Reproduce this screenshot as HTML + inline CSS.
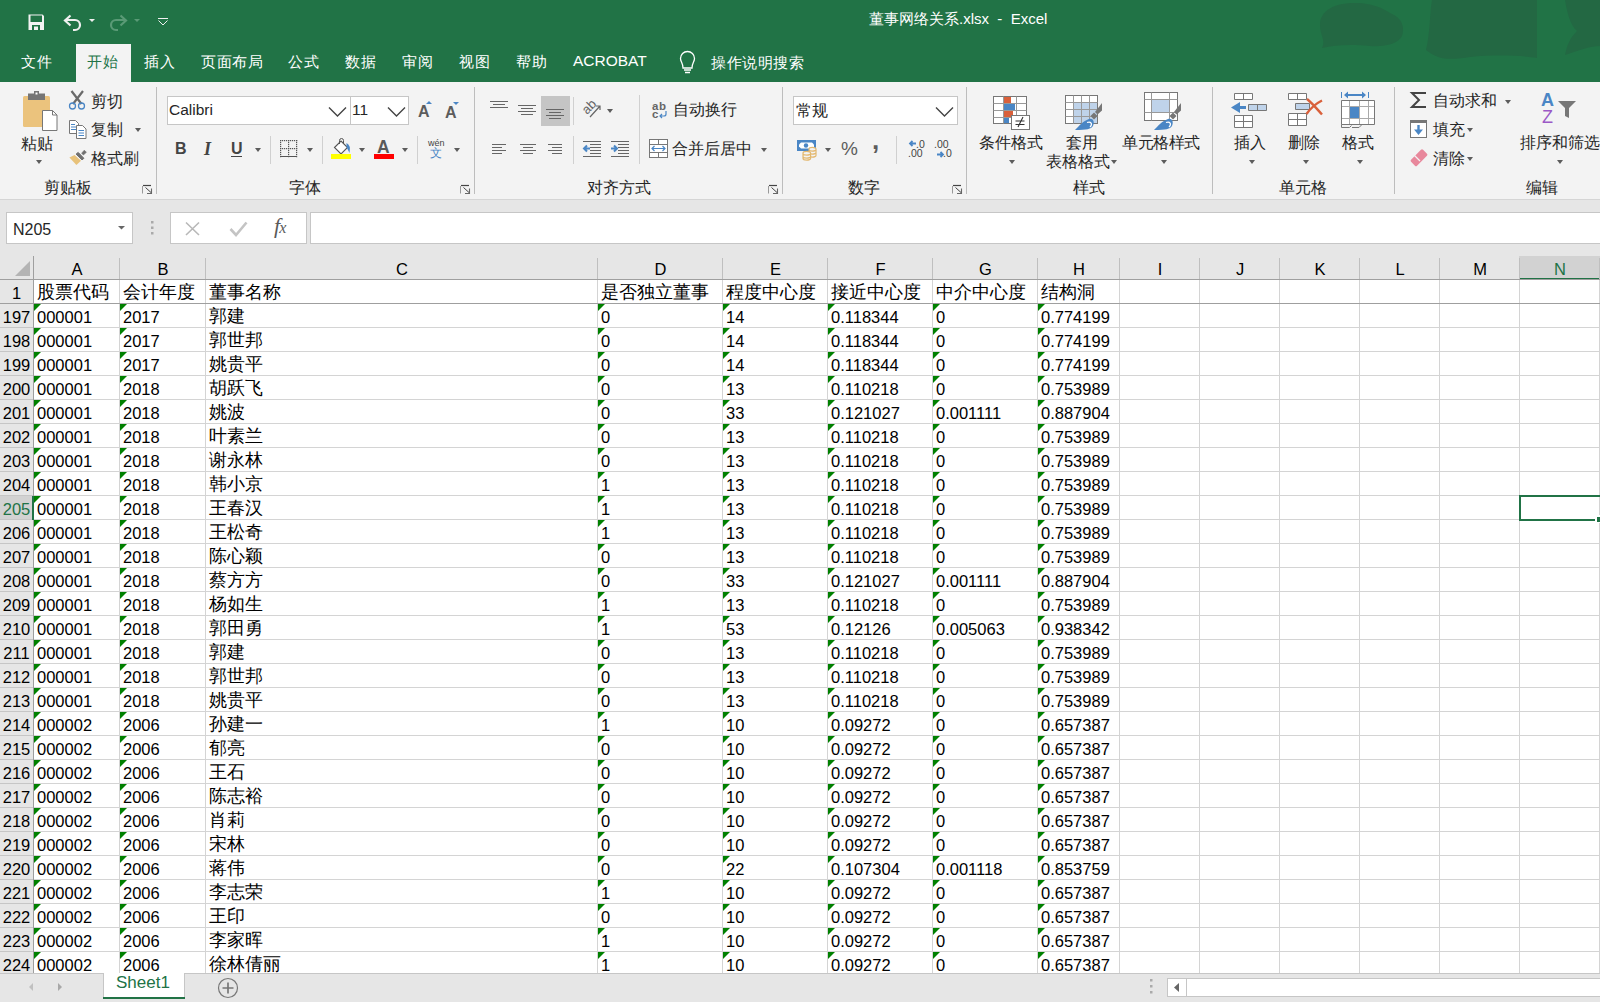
<!DOCTYPE html><html><head><meta charset="utf-8"><style>
*{margin:0;padding:0;box-sizing:border-box}
html,body{width:1600px;height:1002px;overflow:hidden;background:#fff}
body{position:relative;font-family:"Liberation Sans",sans-serif;color:#262626}
.a{position:absolute;white-space:nowrap}
.r{position:absolute;white-space:nowrap;font-size:15.7px;line-height:20px;color:#262626}
.tab{position:absolute;white-space:nowrap;font-size:15px;line-height:20px;letter-spacing:0.5px;color:#fff}
.cj{position:absolute;white-space:nowrap;font-size:18px;line-height:24px;color:#000}
.dg{position:absolute;white-space:nowrap;font-size:16.5px;line-height:24px;color:#000}
.hl{position:absolute;height:1px}
.vl{position:absolute;width:1px}
.tri{position:absolute;width:0;height:0;border-top:7px solid #008000;border-right:7px solid transparent}
.dd{position:absolute;width:0;height:0;border-left:3.5px solid transparent;border-right:3.5px solid transparent;border-top:4px solid #5c5c5c}
.sep{position:absolute;width:1px;background:#c8c8c8}
.gsep{position:absolute;width:1px;background:#c6c6c6}
svg{position:absolute;overflow:visible}
</style></head><body><div class="a" style="left:0px;top:0px;width:1600px;height:82px;background:#217346"></div><svg style="left:0;top:0" width="1600" height="82"><path d="M1322 48 C1326 40 1320 36 1320 25 C1320 10 1335 3 1355 3 C1375 3 1385 10 1392 14 C1402 18 1405 28 1402 36 C1398 44 1385 47 1370 46 C1350 44 1335 45 1322 48 Z" fill="#236843"/><path d="M1426 50 C1430 35 1430 10 1432 0 L1537 0 L1537 58 C1520 55 1490 55 1470 57 C1455 59 1440 62 1426 50 Z" fill="#236843"/><path d="M1565 0 L1600 0 L1600 46 C1590 46 1580 50 1565 55 C1567 45 1570 38 1577 31 C1570 25 1567 12 1565 0 Z" fill="#236843"/></svg><svg style="left:0;top:0" width="200" height="40"><path d="M28.5 14.5 h14 l1.5 1.5 v14 h-15.5 z" fill="#f3f3f3"/><rect x="30.5" y="15.5" width="11.5" height="6.5" fill="#217346"/><rect x="32" y="25" width="8" height="5" fill="#217346"/><rect x="34" y="26.5" width="4" height="3.5" fill="#f3f3f3"/><path d="M66 20 h9 a5 5 0 0 1 0 10 h-2" stroke="#f0f0f0" stroke-width="2.2" fill="none"/><path d="M70.5 15.5 L65 20.5 L70.5 25.5" stroke="#f0f0f0" stroke-width="2.2" fill="none"/><path d="M89 19 h6 l-3 3 z" fill="#f0f0f0"/><path d="M125 20 h-9 a5 5 0 0 0 0 10 h2" stroke="#5a9a76" stroke-width="2.2" fill="none"/><path d="M120.5 15.5 L126 20.5 L120.5 25.5" stroke="#5a9a76" stroke-width="2.2" fill="none"/><path d="M134 19 h6 l-3 3 z" fill="#5a9a76"/><path d="M158 18.5 h10" stroke="#f0f0f0" stroke-width="1"/><path d="M158.5 20.5 L163 25 L167.5 20.5" stroke="#f0f0f0" stroke-width="1" fill="none"/></svg><div class="a" style="left:869px;top:7px;font-size:15px;line-height:24px;color:#fff">董事网络关系.xlsx&nbsp; - &nbsp;Excel</div><div class="a" style="left:76px;top:44px;width:55px;height:38px;background:#f3f3f3"></div><div class="tab" style="left:21px;top:52px;color:#fff">文件</div><div class="tab" style="left:87px;top:52px;color:#217346">开始</div><div class="tab" style="left:144px;top:52px;color:#fff">插入</div><div class="tab" style="left:201px;top:52px;color:#fff">页面布局</div><div class="tab" style="left:288px;top:52px;color:#fff">公式</div><div class="tab" style="left:345px;top:52px;color:#fff">数据</div><div class="tab" style="left:402px;top:52px;color:#fff">审阅</div><div class="tab" style="left:459px;top:52px;color:#fff">视图</div><div class="tab" style="left:516px;top:52px;color:#fff">帮助</div><div class="a" style="left:573px;top:51px;font-size:15.5px;line-height:20px;color:#fff">ACROBAT</div><svg style="left:0;top:0" width="820" height="82"><path d="M683 68 C683 63 680.5 62 680.5 58.5 A7 7 0 0 1 694.5 58.5 C694.5 62 692 63 692 68 Z" stroke="#fff" stroke-width="1.3" fill="none"/><path d="M684 70 h7 M685 72.5 h5" stroke="#fff" stroke-width="1.3"/></svg><div class="tab" style="left:711px;top:53px;color:#fff">操作说明搜索</div><div class="a" style="left:0px;top:82px;width:1600px;height:117px;background:#f3f3f3"></div><div class="a" style="left:0px;top:199px;width:1600px;height:1px;background:#d5d5d5"></div><div class="a" style="left:156px;top:87px;width:1px;height:107px;background:#bdbdbd"></div><div class="a" style="left:474px;top:87px;width:1px;height:107px;background:#bdbdbd"></div><div class="a" style="left:782px;top:87px;width:1px;height:107px;background:#bdbdbd"></div><div class="a" style="left:966px;top:87px;width:1px;height:107px;background:#bdbdbd"></div><div class="a" style="left:1212px;top:87px;width:1px;height:107px;background:#bdbdbd"></div><div class="a" style="left:1394px;top:87px;width:1px;height:107px;background:#bdbdbd"></div><div class="r" style="left:44px;top:178px;">剪贴板</div><div class="r" style="left:289px;top:178px;">字体</div><div class="r" style="left:587px;top:178px;">对齐方式</div><div class="r" style="left:848px;top:178px;">数字</div><div class="r" style="left:1073px;top:178px;">样式</div><div class="r" style="left:1279px;top:178px;">单元格</div><div class="r" style="left:1526px;top:178px;">编辑</div><svg style="left:142px;top:185px" width="11" height="9"><path d="M0.5 8.5 V1" stroke="#999" stroke-width="1"/><path d="M1 0.5 H9" stroke="#444" stroke-width="1.2"/><path d="M3.5 2.5 L9 7.5" stroke="#444" stroke-width="1"/><path d="M9.5 3.5 V8.5 H5" stroke="#666" stroke-width="1.1" fill="none"/></svg><svg style="left:460px;top:185px" width="11" height="9"><path d="M0.5 8.5 V1" stroke="#999" stroke-width="1"/><path d="M1 0.5 H9" stroke="#444" stroke-width="1.2"/><path d="M3.5 2.5 L9 7.5" stroke="#444" stroke-width="1"/><path d="M9.5 3.5 V8.5 H5" stroke="#666" stroke-width="1.1" fill="none"/></svg><svg style="left:768px;top:185px" width="11" height="9"><path d="M0.5 8.5 V1" stroke="#999" stroke-width="1"/><path d="M1 0.5 H9" stroke="#444" stroke-width="1.2"/><path d="M3.5 2.5 L9 7.5" stroke="#444" stroke-width="1"/><path d="M9.5 3.5 V8.5 H5" stroke="#666" stroke-width="1.1" fill="none"/></svg><svg style="left:952px;top:185px" width="11" height="9"><path d="M0.5 8.5 V1" stroke="#999" stroke-width="1"/><path d="M1 0.5 H9" stroke="#444" stroke-width="1.2"/><path d="M3.5 2.5 L9 7.5" stroke="#444" stroke-width="1"/><path d="M9.5 3.5 V8.5 H5" stroke="#666" stroke-width="1.1" fill="none"/></svg><svg style="left:0;top:0" width="160" height="199"><rect x="23" y="96" width="27" height="31" rx="1.5" fill="#ebc37d"/><path d="M28 93.5 h17 v6.5 h-17 z" fill="#757575"/><rect x="34" y="91" width="5" height="4" fill="#757575"/><rect x="35.5" y="92.5" width="2" height="2" fill="#fff"/><path d="M42.5 110.5 h10 l4.5 4.5 v15.5 h-14.5 z" fill="#fff" stroke="#777" stroke-width="1"/><path d="M52.5 110.5 v4.5 h4.5" fill="none" stroke="#777" stroke-width="1"/><path d="M71.5 91 L81.5 104 M83 91 L73 104" stroke="#6a6a6a" stroke-width="2.2"/><circle cx="72.5" cy="106" r="3" fill="none" stroke="#4a86c5" stroke-width="1.3"/><circle cx="81.5" cy="106" r="3" fill="none" stroke="#4a86c5" stroke-width="1.3"/><path d="M69.5 120.5 h6 l3 3 v10 h-9 z" fill="#fff" stroke="#777" stroke-width="1"/><path d="M71 124.5 h4 M71 127 h5 M71 129.5 h5" stroke="#4a86c5" stroke-width="1"/><path d="M76.5 125.5 h6 l3.5 3.5 v9.5 h-9.5 z" fill="#fff" stroke="#777" stroke-width="1"/><path d="M78.5 130.5 h5.5 M78.5 133 h5.5 M78.5 135.5 h5.5" stroke="#4a86c5" stroke-width="1"/><path d="M69.4 157.4 L74.6 155.1 L81 160.7 L76.4 165.1 Z" fill="#e8c27a"/><path d="M76.1 154.1 L78.2 152.4 L83.9 158.3 L82 159.9 Z" fill="#6f6f6f" stroke="#6f6f6f" stroke-width="1" stroke-linejoin="round"/><path d="M81.6 153.2 L84.3 150.2 L86.4 152.3 L83.4 155 Z" fill="#6f6f6f" stroke="#6f6f6f" stroke-width="0.6"/></svg><div class="r" style="left:21px;top:134px;">粘贴</div><div class="dd" style="left:36px;top:160px;border-top-color:#5c5c5c"></div><div class="r" style="left:91px;top:92px;">剪切</div><div class="r" style="left:91px;top:120px;">复制</div><div class="dd" style="left:135px;top:128px;border-top-color:#5c5c5c"></div><div class="r" style="left:91px;top:149px;">格式刷</div><div class="a" style="left:167px;top:96px;width:184px;height:29px;background:#fff;border:1px solid #c6c6c6"></div><div class="a" style="left:350px;top:96px;width:59px;height:29px;background:#fff;border:1px solid #c6c6c6"></div><div class="a" style="left:169px;top:100px;font-size:15.5px;line-height:20px;color:#262626">Calibri</div><div class="a" style="left:352px;top:100px;font-size:15.5px;line-height:20px;color:#262626">11</div><svg style="left:0;top:0" width="480" height="199"><path d="M329 107.5 L337.5 116 L346 107.5" stroke="#444" stroke-width="1.4" fill="none"/><path d="M388 107.5 L396.5 116 L405 107.5" stroke="#444" stroke-width="1.4" fill="none"/><path d="M426 104 l3 -3 l3 3 z" fill="#4a86c5"/><path d="M453 102 l3 3 l3 -3 z" fill="#4a86c5"/><rect x="280" y="140" width="1.2" height="1.2" fill="#555"/><rect x="288" y="140" width="1.2" height="1.2" fill="#555"/><rect x="296" y="140" width="1.2" height="1.2" fill="#555"/><rect x="280" y="142" width="1.2" height="1.2" fill="#555"/><rect x="288" y="142" width="1.2" height="1.2" fill="#555"/><rect x="296" y="142" width="1.2" height="1.2" fill="#555"/><rect x="280" y="144" width="1.2" height="1.2" fill="#555"/><rect x="288" y="144" width="1.2" height="1.2" fill="#555"/><rect x="296" y="144" width="1.2" height="1.2" fill="#555"/><rect x="280" y="146" width="1.2" height="1.2" fill="#555"/><rect x="288" y="146" width="1.2" height="1.2" fill="#555"/><rect x="296" y="146" width="1.2" height="1.2" fill="#555"/><rect x="280" y="148" width="1.2" height="1.2" fill="#555"/><rect x="288" y="148" width="1.2" height="1.2" fill="#555"/><rect x="296" y="148" width="1.2" height="1.2" fill="#555"/><rect x="280" y="150" width="1.2" height="1.2" fill="#555"/><rect x="288" y="150" width="1.2" height="1.2" fill="#555"/><rect x="296" y="150" width="1.2" height="1.2" fill="#555"/><rect x="280" y="152" width="1.2" height="1.2" fill="#555"/><rect x="288" y="152" width="1.2" height="1.2" fill="#555"/><rect x="296" y="152" width="1.2" height="1.2" fill="#555"/><rect x="280" y="154" width="1.2" height="1.2" fill="#555"/><rect x="288" y="154" width="1.2" height="1.2" fill="#555"/><rect x="296" y="154" width="1.2" height="1.2" fill="#555"/><rect x="280" y="156" width="1.2" height="1.2" fill="#555"/><rect x="288" y="156" width="1.2" height="1.2" fill="#555"/><rect x="296" y="156" width="1.2" height="1.2" fill="#555"/><rect x="280" y="140" width="1.2" height="1.2" fill="#555"/><rect x="280" y="148" width="1.2" height="1.2" fill="#555"/><rect x="282" y="140" width="1.2" height="1.2" fill="#555"/><rect x="282" y="148" width="1.2" height="1.2" fill="#555"/><rect x="284" y="140" width="1.2" height="1.2" fill="#555"/><rect x="284" y="148" width="1.2" height="1.2" fill="#555"/><rect x="286" y="140" width="1.2" height="1.2" fill="#555"/><rect x="286" y="148" width="1.2" height="1.2" fill="#555"/><rect x="288" y="140" width="1.2" height="1.2" fill="#555"/><rect x="288" y="148" width="1.2" height="1.2" fill="#555"/><rect x="290" y="140" width="1.2" height="1.2" fill="#555"/><rect x="290" y="148" width="1.2" height="1.2" fill="#555"/><rect x="292" y="140" width="1.2" height="1.2" fill="#555"/><rect x="292" y="148" width="1.2" height="1.2" fill="#555"/><rect x="294" y="140" width="1.2" height="1.2" fill="#555"/><rect x="294" y="148" width="1.2" height="1.2" fill="#555"/><rect x="296" y="140" width="1.2" height="1.2" fill="#555"/><rect x="296" y="148" width="1.2" height="1.2" fill="#555"/><path d="M280 156.5 h17" stroke="#555" stroke-width="1"/><path d="M334.5 147.5 L341 141 L347.5 147.5 L341 154 Z" fill="#fff" stroke="#555" stroke-width="1.1"/><path d="M339.5 144 V140.5 a2 2 0 0 1 4 0 V144" stroke="#555" stroke-width="1" fill="none"/><path d="M346.5 143 q4.5 2 3 10 q-2 -4 -3 -6 z" fill="#4a86c5"/><rect x="331" y="154" width="20" height="5" fill="#ffff00"/><rect x="374" y="154" width="20" height="5" fill="#ff0000"/></svg><div class="a" style="left:418px;top:102px;font-size:16px;line-height:20px;color:#5c5c5c;font-weight:bold">A</div><div class="a" style="left:445px;top:103px;font-size:16px;line-height:20px;color:#5c5c5c;font-weight:bold">A</div><div class="a" style="left:175px;top:139px;font-size:16px;line-height:20px;font-weight:bold;color:#444">B</div><div class="a" style="left:204px;top:139px;font-family:'Liberation Serif',serif;font-size:18px;line-height:20px;font-style:italic;font-weight:bold;color:#444">I</div><div class="a" style="left:231px;top:139px;font-size:16px;line-height:20px;font-weight:bold;color:#444">U</div><div class="a" style="left:231px;top:156px;width:11px;height:1px;background:#444"></div><div class="dd" style="left:255px;top:148px;border-top-color:#5c5c5c"></div><div class="a" style="left:270px;top:136px;width:1px;height:28px;background:#d0d0d0"></div><div class="dd" style="left:307px;top:148px;border-top-color:#5c5c5c"></div><div class="a" style="left:322px;top:136px;width:1px;height:28px;background:#d0d0d0"></div><div class="dd" style="left:359px;top:148px;border-top-color:#5c5c5c"></div><div class="a" style="left:377px;top:137px;font-size:17.5px;line-height:20px;font-weight:bold;color:#595959">A</div><div class="dd" style="left:402px;top:148px;border-top-color:#5c5c5c"></div><div class="a" style="left:417px;top:136px;width:1px;height:28px;background:#d0d0d0"></div><div class="a" style="left:428px;top:138px;font-size:9px;line-height:10px;color:#444">wén</div><div class="a" style="left:430px;top:147px;font-size:12px;line-height:13px;color:#4a86c5">文</div><div class="dd" style="left:454px;top:148px;border-top-color:#5c5c5c"></div><div class="a" style="left:541px;top:96px;width:29px;height:30px;background:#c5c5c5"></div><svg style="left:0;top:0" width="800" height="199"><rect x="490.0" y="101" width="18" height="1" fill="#666"/><rect x="493.0" y="104" width="12" height="1" fill="#666"/><rect x="490.0" y="107" width="18" height="1" fill="#666"/><rect x="518.0" y="105" width="18" height="1" fill="#666"/><rect x="521.0" y="108" width="12" height="1" fill="#666"/><rect x="518.0" y="111" width="18" height="1" fill="#666"/><rect x="521.0" y="114" width="12" height="1" fill="#666"/><rect x="546.0" y="109" width="18" height="1" fill="#666"/><rect x="549.0" y="112" width="12" height="1" fill="#666"/><rect x="546.0" y="115" width="18" height="1" fill="#666"/><rect x="549.0" y="118" width="12" height="1" fill="#666"/><rect x="492" y="144" width="14" height="1" fill="#666"/><rect x="492" y="147" width="10" height="1" fill="#666"/><rect x="492" y="150" width="14" height="1" fill="#666"/><rect x="492" y="153" width="10" height="1" fill="#666"/><rect x="520.0" y="144" width="16" height="1" fill="#666"/><rect x="523.0" y="147" width="10" height="1" fill="#666"/><rect x="520.0" y="150" width="16" height="1" fill="#666"/><rect x="523.0" y="153" width="10" height="1" fill="#666"/><rect x="548" y="144" width="14" height="1" fill="#666"/><rect x="552" y="147" width="10" height="1" fill="#666"/><rect x="548" y="150" width="14" height="1" fill="#666"/><rect x="552" y="153" width="10" height="1" fill="#666"/><rect x="583" y="141" width="18" height="1" fill="#666"/><rect x="590" y="144" width="11" height="1" fill="#666"/><rect x="590" y="147" width="11" height="1" fill="#666"/><rect x="590" y="150" width="11" height="1" fill="#666"/><rect x="590" y="153" width="11" height="1" fill="#666"/><rect x="583" y="156" width="18" height="1" fill="#666"/><path d="M590 148.5 h-6 M587 145.5 l-3 3 l3 3" stroke="#4a86c5" stroke-width="2" fill="none"/><rect x="611" y="141" width="18" height="1" fill="#666"/><rect x="618" y="144" width="11" height="1" fill="#666"/><rect x="618" y="147" width="11" height="1" fill="#666"/><rect x="618" y="150" width="11" height="1" fill="#666"/><rect x="618" y="153" width="11" height="1" fill="#666"/><rect x="611" y="156" width="18" height="1" fill="#666"/><path d="M611 148.5 h6 M614 145.5 l3 3 l-3 3" stroke="#4a86c5" stroke-width="2" fill="none"/><path d="M590 117 L600 106 M596 106 h4 v4" stroke="#666" stroke-width="1.2" fill="none"/><rect x="649.5" y="139.5" width="18" height="18" fill="#fff" stroke="#777"/><path d="M649.5 144.5 h18 M649.5 152.5 h18 M658.5 139.5 v5 M658.5 152.5 v5" stroke="#777" stroke-width="1"/><path d="M652 148.5 h13 M654.5 146 l-2.5 2.5 l2.5 2.5 M662.5 146 l2.5 2.5 l-2.5 2.5" stroke="#4a86c5" stroke-width="1.2" fill="none"/><path d="M666 111 v3 a2 2 0 0 1 -2 2 h-4 M662 114 l-2 2 l2 2" stroke="#4a86c5" stroke-width="1.2" fill="none"/></svg><div class="a" style="left:582px;top:100px;font-size:13px;line-height:14px;color:#666;transform:rotate(-45deg);transform-origin:50% 50%">ab</div><div class="dd" style="left:607px;top:109px;border-top-color:#5c5c5c"></div><div class="a" style="left:573px;top:97px;width:1px;height:28px;background:#d0d0d0"></div><div class="a" style="left:573px;top:136px;width:1px;height:28px;background:#d0d0d0"></div><div class="a" style="left:639px;top:95px;width:1px;height:69px;background:#d0d0d0"></div><div class="a" style="left:652px;top:100px;font-size:11.5px;line-height:12px;color:#666;font-weight:bold;letter-spacing:0.5px">ab</div><div class="a" style="left:652px;top:108px;font-size:11.5px;line-height:12px;color:#666;font-weight:bold">c</div><div class="r" style="left:673px;top:100px;">自动换行</div><div class="r" style="left:672px;top:139px;">合并后居中</div><div class="dd" style="left:761px;top:148px;border-top-color:#5c5c5c"></div><div class="a" style="left:793px;top:96px;width:165px;height:29px;background:#fff;border:1px solid #c6c6c6"></div><div class="r" style="left:796px;top:101px;">常规</div><svg style="left:0;top:0" width="970" height="199"><path d="M936 107.5 L944.5 116 L953 107.5" stroke="#444" stroke-width="1.4" fill="none"/><rect x="797" y="140" width="19" height="11" fill="#4a86c5"/><path d="M801 142.5 h11 l2 2 v2 l-2 2 h-11 l-2 -2 v-2 z" fill="#fff"/><circle cx="806" cy="145.5" r="2.2" fill="#4a86c5"/><path d="M809 149 a3.5 1.5 0 0 1 7 0 v6 a3.5 1.5 0 0 1 -7 0 z" fill="#f3f3f3"/><path d="M809 149.5 a3.5 1.6 0 0 0 7 0 M809 152.5 a3.5 1.6 0 0 0 7 0 M809 155.5 a3.5 1.6 0 0 0 7 0 M809 149 a3.5 1.6 0 0 1 7 0 M809 149 v6.5 M816 149 v6.5" stroke="#e3b86f" stroke-width="1.2" fill="none"/><path d="M803 153 a3.8 1.6 0 0 1 7.6 0 v5 a3.8 1.6 0 0 1 -7.6 0 z" fill="#f3f3f3"/><path d="M803 153.5 a3.8 1.6 0 0 0 7.6 0 M803 156.5 a3.8 1.6 0 0 0 7.6 0 M803 153 a3.8 1.6 0 0 1 7.6 0 M803 153 v5.5 M810.6 153 v5.5 M803 158.5 a3.8 1.6 0 0 0 7.6 0" stroke="#e3b86f" stroke-width="1.2" fill="none"/><path d="M910 143.5 h6 M912.5 141 l-2.5 2.5 l2.5 2.5" stroke="#4a86c5" stroke-width="1.8" fill="none"/><path d="M937 154.5 h6 M940.5 152 l2.5 2.5 l-2.5 2.5" stroke="#4a86c5" stroke-width="1.8" fill="none"/></svg><div class="dd" style="left:825px;top:148px;border-top-color:#5c5c5c"></div><div class="a" style="left:841px;top:139px;font-size:19px;line-height:20px;color:#5c5c5c">%</div><div class="a" style="left:872px;top:130px;font-size:26px;line-height:20px;color:#5c5c5c;font-weight:bold">,</div><div class="a" style="left:896px;top:136px;width:1px;height:28px;background:#d0d0d0"></div><div class="a" style="left:916px;top:139px;font-size:10.5px;line-height:10px;color:#444">.0</div><div class="a" style="left:908px;top:148px;font-size:10.5px;line-height:10px;color:#444">.00</div><div class="a" style="left:934px;top:139px;font-size:10.5px;line-height:10px;color:#444">.00</div><div class="a" style="left:943px;top:148px;font-size:10.5px;line-height:10px;color:#444">.0</div><svg style="left:0;top:0" width="1210" height="199"><rect x="993.5" y="96.5" width="33" height="27" fill="#fff" stroke="#777"/><path d="M993.5 103.5 h33 M993.5 110.5 h33 M993.5 117.5 h33 M1003.5 96.5 v27 M1016.5 96.5 v27" stroke="#999" stroke-width="1"/><rect x="1004" y="97" width="7" height="6" fill="#d9603b"/><rect x="1004" y="104" width="11" height="6" fill="#4a86c5"/><rect x="1004" y="111" width="9" height="6" fill="#d9603b"/><rect x="1004" y="118" width="5" height="5" fill="#4a86c5"/><rect x="1011.5" y="115.5" width="18" height="14" fill="#fff" stroke="#777"/><path d="M1015.5 121 h9 M1015.5 124.5 h9 M1023 117 l-5 10" stroke="#333" stroke-width="1.1" fill="none"/><rect x="1065.5" y="95.5" width="32" height="28" fill="#fff" stroke="#777"/><rect x="1074" y="103" width="23" height="20" fill="#bfd3ea"/><path d="M1065.5 102.5 h32 M1065.5 109.5 h32 M1065.5 116.5 h32 M1073.5 95.5 v28 M1081.5 95.5 v28 M1089.5 95.5 v28" stroke="#999" stroke-width="1"/><path d="M1095 112 L1102 103 L1102 110.5 L1097.5 114.5 Z" fill="#777"/><path d="M1090.5 116 L1094 112.5 L1097.5 116 L1094 119.5 Z" fill="#777"/><path d="M1075 130 C1079 126 1083 121 1089 119 C1093 118 1095 122 1093 126 C1091 129 1087 130 1075 130 Z" fill="#4a86c5"/><path d="M1087 122.5 C1091 121 1093 124 1090 127" stroke="#fff" stroke-width="1.2" fill="none"/><rect x="1144.5" y="92.5" width="33" height="28" fill="#fff" stroke="#777"/><rect x="1152" y="100" width="17" height="12.5" fill="#bfd3ea"/><path d="M1144.5 99.5 h33 M1144.5 112.5 h33 M1151.5 92.5 v28 M1169.5 92.5 v28" stroke="#999" stroke-width="1"/><path d="M1174 112 L1181 103 L1181 110.5 L1176.5 114.5 Z" fill="#777"/><path d="M1169.5 116 L1173 112.5 L1176.5 116 L1173 119.5 Z" fill="#777"/><path d="M1154 130 C1158 126 1162 121 1168 119 C1172 118 1174 122 1172 126 C1170 129 1166 130 1154 130 Z" fill="#4a86c5"/><path d="M1166 122.5 C1170 121 1172 124 1169 127" stroke="#fff" stroke-width="1.2" fill="none"/></svg><div class="r" style="left:979px;top:133px;">条件格式</div><div class="dd" style="left:1009px;top:160px;border-top-color:#5c5c5c"></div><div class="r" style="left:1066px;top:133px;">套用</div><div class="r" style="left:1046px;top:152px;">表格格式</div><div class="dd" style="left:1111px;top:160px;border-top-color:#5c5c5c"></div><div class="r" style="left:1122px;top:133px;letter-spacing:-0.4px">单元格样式</div><div class="dd" style="left:1161px;top:160px;border-top-color:#5c5c5c"></div><svg style="left:0;top:0" width="1600" height="199"><path d="M1234.5 93.5 h18 v6 h-18 z M1243.5 93.5 v6" stroke="#777" fill="#fff"/><path d="M1248.5 104.5 h18 v6 h-18 z" stroke="#777" fill="#bfd3ea"/><path d="M1257.5 104.5 v6" stroke="#777"/><path d="M1234.5 115.5 h18 v12 h-18 z M1243.5 115.5 v12 M1234.5 121.5 h18" stroke="#777" fill="#fff"/><path d="M1246 107.5 h-10" stroke="#4a86c5" stroke-width="3"/><path d="M1231 107.5 L1240 102 L1240 113 Z" fill="#4a86c5"/><path d="M1288.5 93.5 h18 v6 h-18 z M1297.5 93.5 v6" stroke="#777" fill="#fff"/><path d="M1295.5 103.5 h14 v6 h-14 z" stroke="#777" fill="#bfd3ea"/><path d="M1288.5 113.5 h18 v12 h-18 z M1297.5 113.5 v12 M1288.5 119.5 h18" stroke="#777" fill="#fff"/><path d="M1307 99 C1312 103 1317 109 1322 114.5 M1322 100.5 C1315 104 1310 109 1306.5 114" stroke="#d9603b" stroke-width="2.4" fill="none"/><path d="M1341.5 92 v6 M1368.5 92 v6" stroke="#4a86c5" stroke-width="1"/><path d="M1346 95 h18" stroke="#4a86c5" stroke-width="2"/><path d="M1344 95 l4 -3.5 v7 z M1366 95 l-4 -3.5 v7 z" fill="#4a86c5"/><path d="M1341.5 100.5 h33 v24 h-33 z" fill="#fff" stroke="#777"/><path d="M1342 106.5 h32 M1342 118.5 h32 M1349.5 101 v23 M1359.5 101 v23 M1368.5 101 v23" stroke="#aaa"/><path d="M1341.5 124.5 v3 h8 l2 -2 M1352 127.5 h7 l3 -3" stroke="#777" fill="none"/><rect x="1350" y="107" width="9" height="11" fill="#4a86c5"/><path d="M1426 93 h-14 l7 7 l-7 7 h14" stroke="#444" stroke-width="2" fill="none"/><rect x="1410.5" y="120.5" width="16" height="17" fill="#fff" stroke="#777"/><rect x="1411" y="121" width="16" height="2" fill="#777"/><path d="M1418.5 125 v6" stroke="#4a86c5" stroke-width="2.4"/><path d="M1414 129.5 h9 l-4.5 5.5 z" fill="#4a86c5"/><rect x="1410.5" y="153.5" width="17" height="8.5" rx="1.5" fill="#e8889c" transform="rotate(-45 1419 157.75)"/><path d="M1414.5 155.5 L1420 161" stroke="#f3f3f3" stroke-width="1.3"/><path d="M1558 101 h18 l-7 7 v10 l-4 -2 v-8 z" fill="#777"/></svg><div class="a" style="left:1541px;top:90px;font-size:18px;line-height:20px;color:#4a86c5;font-weight:bold">A</div><div class="a" style="left:1542px;top:107px;font-size:18px;line-height:20px;color:#9b59c6">Z</div><div class="r" style="left:1234px;top:133px;">插入</div><div class="dd" style="left:1249px;top:160px;border-top-color:#5c5c5c"></div><div class="r" style="left:1288px;top:133px;">删除</div><div class="dd" style="left:1303px;top:160px;border-top-color:#5c5c5c"></div><div class="r" style="left:1342px;top:133px;">格式</div><div class="dd" style="left:1357px;top:160px;border-top-color:#5c5c5c"></div><div class="r" style="left:1433px;top:91px;">自动求和</div><div class="dd" style="left:1505px;top:100px;border-top-color:#5c5c5c"></div><div class="r" style="left:1433px;top:120px;">填充</div><div class="dd" style="left:1467px;top:128px;border-top-color:#5c5c5c"></div><div class="r" style="left:1433px;top:149px;">清除</div><div class="dd" style="left:1467px;top:157px;border-top-color:#5c5c5c"></div><div class="r" style="left:1520px;top:133px;">排序和筛选</div><div class="dd" style="left:1557px;top:160px;border-top-color:#5c5c5c"></div><div class="a" style="left:0px;top:200px;width:1600px;height:56px;background:#e6e6e6"></div><div class="a" style="left:6px;top:212px;width:127px;height:32px;background:#fff;border:1px solid #c6c6c6"></div><div class="a" style="left:13px;top:220px;font-size:16px;line-height:20px;color:#262626">N205</div><svg style="left:0;top:0" width="340" height="256"><path d="M118 226 h7 l-3.5 3.5 z" fill="#666"/><rect x="151" y="221" width="2.5" height="2.5" fill="#aaa"/><rect x="151" y="226.5" width="2.5" height="2.5" fill="#aaa"/><rect x="151" y="232" width="2.5" height="2.5" fill="#aaa"/><path d="M186 222.5 L199 235 M199 222.5 L186 235" stroke="#b8b8b8" stroke-width="1.6"/><path d="M230.5 229 L236 235 L246.5 222.5" stroke="#c2c2c2" stroke-width="2.6" fill="none"/></svg><div class="a" style="left:170px;top:212px;width:137px;height:32px;background:#fff;border:1px solid #c6c6c6"></div><svg style="left:0;top:0" width="340" height="256"><path d="M186 222.5 L199 235 M199 222.5 L186 235" stroke="#b8b8b8" stroke-width="1.6"/><path d="M230.5 229 L236 235 L246.5 222.5" stroke="#c4c4c4" stroke-width="2.6" fill="none"/></svg><div class="a" style="left:274px;top:214px;font-family:'Liberation Serif',serif;font-size:22px;line-height:24px;color:#5a5a5a;letter-spacing:-1px"><i>f</i><i style="font-size:16px">x</i></div><div class="a" style="left:310px;top:212px;width:1290px;height:32px;background:#fff;border:1px solid #c6c6c6;border-right:none"></div><div class="a" style="left:0px;top:256px;width:1600px;height:717px;background:#fff"></div><div class="a" style="left:0px;top:256px;width:1600px;height:24px;background:#e6e6e6"></div><div class="a" style="left:0px;top:280px;width:33px;height:693px;background:#e6e6e6"></div><div class="a" style="left:1519px;top:256px;width:81px;height:24px;background:#d2d2d2"></div><div class="a" style="left:1519px;top:278px;width:81px;height:2px;background:#217346"></div><div class="a" style="left:0px;top:496px;width:32px;height:24px;background:#d2d2d2"></div><svg style="left:0;top:0" width="34" height="280"><path d="M30 261 V276 H15 Z" fill="#b4b4b4"/></svg><div class="a" style="left:33px;top:327px;width:1567px;height:1px;background:#d4d4d4"></div><div class="a" style="left:0px;top:327px;width:33px;height:1px;background:#c6c6c6"></div><div class="a" style="left:33px;top:351px;width:1567px;height:1px;background:#d4d4d4"></div><div class="a" style="left:0px;top:351px;width:33px;height:1px;background:#c6c6c6"></div><div class="a" style="left:33px;top:375px;width:1567px;height:1px;background:#d4d4d4"></div><div class="a" style="left:0px;top:375px;width:33px;height:1px;background:#c6c6c6"></div><div class="a" style="left:33px;top:399px;width:1567px;height:1px;background:#d4d4d4"></div><div class="a" style="left:0px;top:399px;width:33px;height:1px;background:#c6c6c6"></div><div class="a" style="left:33px;top:423px;width:1567px;height:1px;background:#d4d4d4"></div><div class="a" style="left:0px;top:423px;width:33px;height:1px;background:#c6c6c6"></div><div class="a" style="left:33px;top:447px;width:1567px;height:1px;background:#d4d4d4"></div><div class="a" style="left:0px;top:447px;width:33px;height:1px;background:#c6c6c6"></div><div class="a" style="left:33px;top:471px;width:1567px;height:1px;background:#d4d4d4"></div><div class="a" style="left:0px;top:471px;width:33px;height:1px;background:#c6c6c6"></div><div class="a" style="left:33px;top:495px;width:1567px;height:1px;background:#d4d4d4"></div><div class="a" style="left:0px;top:495px;width:33px;height:1px;background:#c6c6c6"></div><div class="a" style="left:33px;top:519px;width:1567px;height:1px;background:#d4d4d4"></div><div class="a" style="left:0px;top:519px;width:33px;height:1px;background:#c6c6c6"></div><div class="a" style="left:33px;top:543px;width:1567px;height:1px;background:#d4d4d4"></div><div class="a" style="left:0px;top:543px;width:33px;height:1px;background:#c6c6c6"></div><div class="a" style="left:33px;top:567px;width:1567px;height:1px;background:#d4d4d4"></div><div class="a" style="left:0px;top:567px;width:33px;height:1px;background:#c6c6c6"></div><div class="a" style="left:33px;top:591px;width:1567px;height:1px;background:#d4d4d4"></div><div class="a" style="left:0px;top:591px;width:33px;height:1px;background:#c6c6c6"></div><div class="a" style="left:33px;top:615px;width:1567px;height:1px;background:#d4d4d4"></div><div class="a" style="left:0px;top:615px;width:33px;height:1px;background:#c6c6c6"></div><div class="a" style="left:33px;top:639px;width:1567px;height:1px;background:#d4d4d4"></div><div class="a" style="left:0px;top:639px;width:33px;height:1px;background:#c6c6c6"></div><div class="a" style="left:33px;top:663px;width:1567px;height:1px;background:#d4d4d4"></div><div class="a" style="left:0px;top:663px;width:33px;height:1px;background:#c6c6c6"></div><div class="a" style="left:33px;top:687px;width:1567px;height:1px;background:#d4d4d4"></div><div class="a" style="left:0px;top:687px;width:33px;height:1px;background:#c6c6c6"></div><div class="a" style="left:33px;top:711px;width:1567px;height:1px;background:#d4d4d4"></div><div class="a" style="left:0px;top:711px;width:33px;height:1px;background:#c6c6c6"></div><div class="a" style="left:33px;top:735px;width:1567px;height:1px;background:#d4d4d4"></div><div class="a" style="left:0px;top:735px;width:33px;height:1px;background:#c6c6c6"></div><div class="a" style="left:33px;top:759px;width:1567px;height:1px;background:#d4d4d4"></div><div class="a" style="left:0px;top:759px;width:33px;height:1px;background:#c6c6c6"></div><div class="a" style="left:33px;top:783px;width:1567px;height:1px;background:#d4d4d4"></div><div class="a" style="left:0px;top:783px;width:33px;height:1px;background:#c6c6c6"></div><div class="a" style="left:33px;top:807px;width:1567px;height:1px;background:#d4d4d4"></div><div class="a" style="left:0px;top:807px;width:33px;height:1px;background:#c6c6c6"></div><div class="a" style="left:33px;top:831px;width:1567px;height:1px;background:#d4d4d4"></div><div class="a" style="left:0px;top:831px;width:33px;height:1px;background:#c6c6c6"></div><div class="a" style="left:33px;top:855px;width:1567px;height:1px;background:#d4d4d4"></div><div class="a" style="left:0px;top:855px;width:33px;height:1px;background:#c6c6c6"></div><div class="a" style="left:33px;top:879px;width:1567px;height:1px;background:#d4d4d4"></div><div class="a" style="left:0px;top:879px;width:33px;height:1px;background:#c6c6c6"></div><div class="a" style="left:33px;top:903px;width:1567px;height:1px;background:#d4d4d4"></div><div class="a" style="left:0px;top:903px;width:33px;height:1px;background:#c6c6c6"></div><div class="a" style="left:33px;top:927px;width:1567px;height:1px;background:#d4d4d4"></div><div class="a" style="left:0px;top:927px;width:33px;height:1px;background:#c6c6c6"></div><div class="a" style="left:33px;top:951px;width:1567px;height:1px;background:#d4d4d4"></div><div class="a" style="left:0px;top:951px;width:33px;height:1px;background:#c6c6c6"></div><div class="a" style="left:119px;top:280px;width:1px;height:693px;background:#d4d4d4"></div><div class="a" style="left:119px;top:258px;width:1px;height:21px;background:#bfbfbf"></div><div class="a" style="left:205px;top:280px;width:1px;height:693px;background:#d4d4d4"></div><div class="a" style="left:205px;top:258px;width:1px;height:21px;background:#bfbfbf"></div><div class="a" style="left:597px;top:280px;width:1px;height:693px;background:#d4d4d4"></div><div class="a" style="left:597px;top:258px;width:1px;height:21px;background:#bfbfbf"></div><div class="a" style="left:722px;top:280px;width:1px;height:693px;background:#d4d4d4"></div><div class="a" style="left:722px;top:258px;width:1px;height:21px;background:#bfbfbf"></div><div class="a" style="left:827px;top:280px;width:1px;height:693px;background:#d4d4d4"></div><div class="a" style="left:827px;top:258px;width:1px;height:21px;background:#bfbfbf"></div><div class="a" style="left:932px;top:280px;width:1px;height:693px;background:#d4d4d4"></div><div class="a" style="left:932px;top:258px;width:1px;height:21px;background:#bfbfbf"></div><div class="a" style="left:1037px;top:280px;width:1px;height:693px;background:#d4d4d4"></div><div class="a" style="left:1037px;top:258px;width:1px;height:21px;background:#bfbfbf"></div><div class="a" style="left:1119px;top:280px;width:1px;height:693px;background:#d4d4d4"></div><div class="a" style="left:1119px;top:258px;width:1px;height:21px;background:#bfbfbf"></div><div class="a" style="left:1199px;top:280px;width:1px;height:693px;background:#d4d4d4"></div><div class="a" style="left:1199px;top:258px;width:1px;height:21px;background:#bfbfbf"></div><div class="a" style="left:1279px;top:280px;width:1px;height:693px;background:#d4d4d4"></div><div class="a" style="left:1279px;top:258px;width:1px;height:21px;background:#bfbfbf"></div><div class="a" style="left:1359px;top:280px;width:1px;height:693px;background:#d4d4d4"></div><div class="a" style="left:1359px;top:258px;width:1px;height:21px;background:#bfbfbf"></div><div class="a" style="left:1439px;top:280px;width:1px;height:693px;background:#d4d4d4"></div><div class="a" style="left:1439px;top:258px;width:1px;height:21px;background:#bfbfbf"></div><div class="a" style="left:1519px;top:280px;width:1px;height:693px;background:#d4d4d4"></div><div class="a" style="left:1519px;top:258px;width:1px;height:21px;background:#bfbfbf"></div><div class="a" style="left:1599px;top:280px;width:1px;height:693px;background:#d4d4d4"></div><div class="a" style="left:1599px;top:258px;width:1px;height:21px;background:#bfbfbf"></div><div class="a" style="left:33px;top:256px;width:1px;height:717px;background:#9f9f9f"></div><div class="a" style="left:32px;top:496px;width:2px;height:24px;background:#217346"></div><div class="a" style="left:0px;top:279px;width:1600px;height:1px;background:#9f9f9f"></div><div class="a" style="left:0px;top:303px;width:1600px;height:1px;background:#9f9f9f"></div><div class="dg" style="left:34px;top:257px;width:86px;text-align:center;color:#000">A</div><div class="dg" style="left:120px;top:257px;width:86px;text-align:center;color:#000">B</div><div class="dg" style="left:206px;top:257px;width:392px;text-align:center;color:#000">C</div><div class="dg" style="left:598px;top:257px;width:125px;text-align:center;color:#000">D</div><div class="dg" style="left:723px;top:257px;width:105px;text-align:center;color:#000">E</div><div class="dg" style="left:828px;top:257px;width:105px;text-align:center;color:#000">F</div><div class="dg" style="left:933px;top:257px;width:105px;text-align:center;color:#000">G</div><div class="dg" style="left:1038px;top:257px;width:82px;text-align:center;color:#000">H</div><div class="dg" style="left:1120px;top:257px;width:80px;text-align:center;color:#000">I</div><div class="dg" style="left:1200px;top:257px;width:80px;text-align:center;color:#000">J</div><div class="dg" style="left:1280px;top:257px;width:80px;text-align:center;color:#000">K</div><div class="dg" style="left:1360px;top:257px;width:80px;text-align:center;color:#000">L</div><div class="dg" style="left:1440px;top:257px;width:80px;text-align:center;color:#000">M</div><div class="dg" style="left:1520px;top:257px;width:80px;text-align:center;color:#217346">N</div><div class="cj" style="left:37px;top:280px">股票代码</div><div class="cj" style="left:123px;top:280px">会计年度</div><div class="cj" style="left:209px;top:280px">董事名称</div><div class="cj" style="left:601px;top:280px">是否独立董事</div><div class="cj" style="left:726px;top:280px">程度中心度</div><div class="cj" style="left:831px;top:280px">接近中心度</div><div class="cj" style="left:936px;top:280px">中介中心度</div><div class="cj" style="left:1041px;top:280px">结构洞</div><div class="dg" style="left:0;top:281px;width:33px;text-align:center">1</div><div class="a" style="left:0;top:0;width:1600px;height:973px;overflow:hidden"><div class="dg" style="left:0;top:305px;width:33px;text-align:center;color:#000">197</div><div class="tri" style="left:34px;top:304px"></div><div class="dg" style="left:37px;top:305px">000001</div><div class="tri" style="left:120px;top:304px"></div><div class="dg" style="left:123px;top:305px">2017</div><div class="cj" style="left:209px;top:304px">郭建</div><div class="tri" style="left:598px;top:304px"></div><div class="dg" style="left:601px;top:305px">0</div><div class="tri" style="left:723px;top:304px"></div><div class="dg" style="left:726px;top:305px">14</div><div class="tri" style="left:828px;top:304px"></div><div class="dg" style="left:831px;top:305px">0.118344</div><div class="tri" style="left:933px;top:304px"></div><div class="dg" style="left:936px;top:305px">0</div><div class="tri" style="left:1038px;top:304px"></div><div class="dg" style="left:1041px;top:305px">0.774199</div><div class="dg" style="left:0;top:329px;width:33px;text-align:center;color:#000">198</div><div class="tri" style="left:34px;top:328px"></div><div class="dg" style="left:37px;top:329px">000001</div><div class="tri" style="left:120px;top:328px"></div><div class="dg" style="left:123px;top:329px">2017</div><div class="cj" style="left:209px;top:328px">郭世邦</div><div class="tri" style="left:598px;top:328px"></div><div class="dg" style="left:601px;top:329px">0</div><div class="tri" style="left:723px;top:328px"></div><div class="dg" style="left:726px;top:329px">14</div><div class="tri" style="left:828px;top:328px"></div><div class="dg" style="left:831px;top:329px">0.118344</div><div class="tri" style="left:933px;top:328px"></div><div class="dg" style="left:936px;top:329px">0</div><div class="tri" style="left:1038px;top:328px"></div><div class="dg" style="left:1041px;top:329px">0.774199</div><div class="dg" style="left:0;top:353px;width:33px;text-align:center;color:#000">199</div><div class="tri" style="left:34px;top:352px"></div><div class="dg" style="left:37px;top:353px">000001</div><div class="tri" style="left:120px;top:352px"></div><div class="dg" style="left:123px;top:353px">2017</div><div class="cj" style="left:209px;top:352px">姚贵平</div><div class="tri" style="left:598px;top:352px"></div><div class="dg" style="left:601px;top:353px">0</div><div class="tri" style="left:723px;top:352px"></div><div class="dg" style="left:726px;top:353px">14</div><div class="tri" style="left:828px;top:352px"></div><div class="dg" style="left:831px;top:353px">0.118344</div><div class="tri" style="left:933px;top:352px"></div><div class="dg" style="left:936px;top:353px">0</div><div class="tri" style="left:1038px;top:352px"></div><div class="dg" style="left:1041px;top:353px">0.774199</div><div class="dg" style="left:0;top:377px;width:33px;text-align:center;color:#000">200</div><div class="tri" style="left:34px;top:376px"></div><div class="dg" style="left:37px;top:377px">000001</div><div class="tri" style="left:120px;top:376px"></div><div class="dg" style="left:123px;top:377px">2018</div><div class="cj" style="left:209px;top:376px">胡跃飞</div><div class="tri" style="left:598px;top:376px"></div><div class="dg" style="left:601px;top:377px">0</div><div class="tri" style="left:723px;top:376px"></div><div class="dg" style="left:726px;top:377px">13</div><div class="tri" style="left:828px;top:376px"></div><div class="dg" style="left:831px;top:377px">0.110218</div><div class="tri" style="left:933px;top:376px"></div><div class="dg" style="left:936px;top:377px">0</div><div class="tri" style="left:1038px;top:376px"></div><div class="dg" style="left:1041px;top:377px">0.753989</div><div class="dg" style="left:0;top:401px;width:33px;text-align:center;color:#000">201</div><div class="tri" style="left:34px;top:400px"></div><div class="dg" style="left:37px;top:401px">000001</div><div class="tri" style="left:120px;top:400px"></div><div class="dg" style="left:123px;top:401px">2018</div><div class="cj" style="left:209px;top:400px">姚波</div><div class="tri" style="left:598px;top:400px"></div><div class="dg" style="left:601px;top:401px">0</div><div class="tri" style="left:723px;top:400px"></div><div class="dg" style="left:726px;top:401px">33</div><div class="tri" style="left:828px;top:400px"></div><div class="dg" style="left:831px;top:401px">0.121027</div><div class="tri" style="left:933px;top:400px"></div><div class="dg" style="left:936px;top:401px">0.001111</div><div class="tri" style="left:1038px;top:400px"></div><div class="dg" style="left:1041px;top:401px">0.887904</div><div class="dg" style="left:0;top:425px;width:33px;text-align:center;color:#000">202</div><div class="tri" style="left:34px;top:424px"></div><div class="dg" style="left:37px;top:425px">000001</div><div class="tri" style="left:120px;top:424px"></div><div class="dg" style="left:123px;top:425px">2018</div><div class="cj" style="left:209px;top:424px">叶素兰</div><div class="tri" style="left:598px;top:424px"></div><div class="dg" style="left:601px;top:425px">0</div><div class="tri" style="left:723px;top:424px"></div><div class="dg" style="left:726px;top:425px">13</div><div class="tri" style="left:828px;top:424px"></div><div class="dg" style="left:831px;top:425px">0.110218</div><div class="tri" style="left:933px;top:424px"></div><div class="dg" style="left:936px;top:425px">0</div><div class="tri" style="left:1038px;top:424px"></div><div class="dg" style="left:1041px;top:425px">0.753989</div><div class="dg" style="left:0;top:449px;width:33px;text-align:center;color:#000">203</div><div class="tri" style="left:34px;top:448px"></div><div class="dg" style="left:37px;top:449px">000001</div><div class="tri" style="left:120px;top:448px"></div><div class="dg" style="left:123px;top:449px">2018</div><div class="cj" style="left:209px;top:448px">谢永林</div><div class="tri" style="left:598px;top:448px"></div><div class="dg" style="left:601px;top:449px">0</div><div class="tri" style="left:723px;top:448px"></div><div class="dg" style="left:726px;top:449px">13</div><div class="tri" style="left:828px;top:448px"></div><div class="dg" style="left:831px;top:449px">0.110218</div><div class="tri" style="left:933px;top:448px"></div><div class="dg" style="left:936px;top:449px">0</div><div class="tri" style="left:1038px;top:448px"></div><div class="dg" style="left:1041px;top:449px">0.753989</div><div class="dg" style="left:0;top:473px;width:33px;text-align:center;color:#000">204</div><div class="tri" style="left:34px;top:472px"></div><div class="dg" style="left:37px;top:473px">000001</div><div class="tri" style="left:120px;top:472px"></div><div class="dg" style="left:123px;top:473px">2018</div><div class="cj" style="left:209px;top:472px">韩小京</div><div class="tri" style="left:598px;top:472px"></div><div class="dg" style="left:601px;top:473px">1</div><div class="tri" style="left:723px;top:472px"></div><div class="dg" style="left:726px;top:473px">13</div><div class="tri" style="left:828px;top:472px"></div><div class="dg" style="left:831px;top:473px">0.110218</div><div class="tri" style="left:933px;top:472px"></div><div class="dg" style="left:936px;top:473px">0</div><div class="tri" style="left:1038px;top:472px"></div><div class="dg" style="left:1041px;top:473px">0.753989</div><div class="dg" style="left:0;top:497px;width:33px;text-align:center;color:#217346">205</div><div class="tri" style="left:34px;top:496px"></div><div class="dg" style="left:37px;top:497px">000001</div><div class="tri" style="left:120px;top:496px"></div><div class="dg" style="left:123px;top:497px">2018</div><div class="cj" style="left:209px;top:496px">王春汉</div><div class="tri" style="left:598px;top:496px"></div><div class="dg" style="left:601px;top:497px">1</div><div class="tri" style="left:723px;top:496px"></div><div class="dg" style="left:726px;top:497px">13</div><div class="tri" style="left:828px;top:496px"></div><div class="dg" style="left:831px;top:497px">0.110218</div><div class="tri" style="left:933px;top:496px"></div><div class="dg" style="left:936px;top:497px">0</div><div class="tri" style="left:1038px;top:496px"></div><div class="dg" style="left:1041px;top:497px">0.753989</div><div class="dg" style="left:0;top:521px;width:33px;text-align:center;color:#000">206</div><div class="tri" style="left:34px;top:520px"></div><div class="dg" style="left:37px;top:521px">000001</div><div class="tri" style="left:120px;top:520px"></div><div class="dg" style="left:123px;top:521px">2018</div><div class="cj" style="left:209px;top:520px">王松奇</div><div class="tri" style="left:598px;top:520px"></div><div class="dg" style="left:601px;top:521px">1</div><div class="tri" style="left:723px;top:520px"></div><div class="dg" style="left:726px;top:521px">13</div><div class="tri" style="left:828px;top:520px"></div><div class="dg" style="left:831px;top:521px">0.110218</div><div class="tri" style="left:933px;top:520px"></div><div class="dg" style="left:936px;top:521px">0</div><div class="tri" style="left:1038px;top:520px"></div><div class="dg" style="left:1041px;top:521px">0.753989</div><div class="dg" style="left:0;top:545px;width:33px;text-align:center;color:#000">207</div><div class="tri" style="left:34px;top:544px"></div><div class="dg" style="left:37px;top:545px">000001</div><div class="tri" style="left:120px;top:544px"></div><div class="dg" style="left:123px;top:545px">2018</div><div class="cj" style="left:209px;top:544px">陈心颖</div><div class="tri" style="left:598px;top:544px"></div><div class="dg" style="left:601px;top:545px">0</div><div class="tri" style="left:723px;top:544px"></div><div class="dg" style="left:726px;top:545px">13</div><div class="tri" style="left:828px;top:544px"></div><div class="dg" style="left:831px;top:545px">0.110218</div><div class="tri" style="left:933px;top:544px"></div><div class="dg" style="left:936px;top:545px">0</div><div class="tri" style="left:1038px;top:544px"></div><div class="dg" style="left:1041px;top:545px">0.753989</div><div class="dg" style="left:0;top:569px;width:33px;text-align:center;color:#000">208</div><div class="tri" style="left:34px;top:568px"></div><div class="dg" style="left:37px;top:569px">000001</div><div class="tri" style="left:120px;top:568px"></div><div class="dg" style="left:123px;top:569px">2018</div><div class="cj" style="left:209px;top:568px">蔡方方</div><div class="tri" style="left:598px;top:568px"></div><div class="dg" style="left:601px;top:569px">0</div><div class="tri" style="left:723px;top:568px"></div><div class="dg" style="left:726px;top:569px">33</div><div class="tri" style="left:828px;top:568px"></div><div class="dg" style="left:831px;top:569px">0.121027</div><div class="tri" style="left:933px;top:568px"></div><div class="dg" style="left:936px;top:569px">0.001111</div><div class="tri" style="left:1038px;top:568px"></div><div class="dg" style="left:1041px;top:569px">0.887904</div><div class="dg" style="left:0;top:593px;width:33px;text-align:center;color:#000">209</div><div class="tri" style="left:34px;top:592px"></div><div class="dg" style="left:37px;top:593px">000001</div><div class="tri" style="left:120px;top:592px"></div><div class="dg" style="left:123px;top:593px">2018</div><div class="cj" style="left:209px;top:592px">杨如生</div><div class="tri" style="left:598px;top:592px"></div><div class="dg" style="left:601px;top:593px">1</div><div class="tri" style="left:723px;top:592px"></div><div class="dg" style="left:726px;top:593px">13</div><div class="tri" style="left:828px;top:592px"></div><div class="dg" style="left:831px;top:593px">0.110218</div><div class="tri" style="left:933px;top:592px"></div><div class="dg" style="left:936px;top:593px">0</div><div class="tri" style="left:1038px;top:592px"></div><div class="dg" style="left:1041px;top:593px">0.753989</div><div class="dg" style="left:0;top:617px;width:33px;text-align:center;color:#000">210</div><div class="tri" style="left:34px;top:616px"></div><div class="dg" style="left:37px;top:617px">000001</div><div class="tri" style="left:120px;top:616px"></div><div class="dg" style="left:123px;top:617px">2018</div><div class="cj" style="left:209px;top:616px">郭田勇</div><div class="tri" style="left:598px;top:616px"></div><div class="dg" style="left:601px;top:617px">1</div><div class="tri" style="left:723px;top:616px"></div><div class="dg" style="left:726px;top:617px">53</div><div class="tri" style="left:828px;top:616px"></div><div class="dg" style="left:831px;top:617px">0.12126</div><div class="tri" style="left:933px;top:616px"></div><div class="dg" style="left:936px;top:617px">0.005063</div><div class="tri" style="left:1038px;top:616px"></div><div class="dg" style="left:1041px;top:617px">0.938342</div><div class="dg" style="left:0;top:641px;width:33px;text-align:center;color:#000">211</div><div class="tri" style="left:34px;top:640px"></div><div class="dg" style="left:37px;top:641px">000001</div><div class="tri" style="left:120px;top:640px"></div><div class="dg" style="left:123px;top:641px">2018</div><div class="cj" style="left:209px;top:640px">郭建</div><div class="tri" style="left:598px;top:640px"></div><div class="dg" style="left:601px;top:641px">0</div><div class="tri" style="left:723px;top:640px"></div><div class="dg" style="left:726px;top:641px">13</div><div class="tri" style="left:828px;top:640px"></div><div class="dg" style="left:831px;top:641px">0.110218</div><div class="tri" style="left:933px;top:640px"></div><div class="dg" style="left:936px;top:641px">0</div><div class="tri" style="left:1038px;top:640px"></div><div class="dg" style="left:1041px;top:641px">0.753989</div><div class="dg" style="left:0;top:665px;width:33px;text-align:center;color:#000">212</div><div class="tri" style="left:34px;top:664px"></div><div class="dg" style="left:37px;top:665px">000001</div><div class="tri" style="left:120px;top:664px"></div><div class="dg" style="left:123px;top:665px">2018</div><div class="cj" style="left:209px;top:664px">郭世邦</div><div class="tri" style="left:598px;top:664px"></div><div class="dg" style="left:601px;top:665px">0</div><div class="tri" style="left:723px;top:664px"></div><div class="dg" style="left:726px;top:665px">13</div><div class="tri" style="left:828px;top:664px"></div><div class="dg" style="left:831px;top:665px">0.110218</div><div class="tri" style="left:933px;top:664px"></div><div class="dg" style="left:936px;top:665px">0</div><div class="tri" style="left:1038px;top:664px"></div><div class="dg" style="left:1041px;top:665px">0.753989</div><div class="dg" style="left:0;top:689px;width:33px;text-align:center;color:#000">213</div><div class="tri" style="left:34px;top:688px"></div><div class="dg" style="left:37px;top:689px">000001</div><div class="tri" style="left:120px;top:688px"></div><div class="dg" style="left:123px;top:689px">2018</div><div class="cj" style="left:209px;top:688px">姚贵平</div><div class="tri" style="left:598px;top:688px"></div><div class="dg" style="left:601px;top:689px">0</div><div class="tri" style="left:723px;top:688px"></div><div class="dg" style="left:726px;top:689px">13</div><div class="tri" style="left:828px;top:688px"></div><div class="dg" style="left:831px;top:689px">0.110218</div><div class="tri" style="left:933px;top:688px"></div><div class="dg" style="left:936px;top:689px">0</div><div class="tri" style="left:1038px;top:688px"></div><div class="dg" style="left:1041px;top:689px">0.753989</div><div class="dg" style="left:0;top:713px;width:33px;text-align:center;color:#000">214</div><div class="tri" style="left:34px;top:712px"></div><div class="dg" style="left:37px;top:713px">000002</div><div class="tri" style="left:120px;top:712px"></div><div class="dg" style="left:123px;top:713px">2006</div><div class="cj" style="left:209px;top:712px">孙建一</div><div class="tri" style="left:598px;top:712px"></div><div class="dg" style="left:601px;top:713px">1</div><div class="tri" style="left:723px;top:712px"></div><div class="dg" style="left:726px;top:713px">10</div><div class="tri" style="left:828px;top:712px"></div><div class="dg" style="left:831px;top:713px">0.09272</div><div class="tri" style="left:933px;top:712px"></div><div class="dg" style="left:936px;top:713px">0</div><div class="tri" style="left:1038px;top:712px"></div><div class="dg" style="left:1041px;top:713px">0.657387</div><div class="dg" style="left:0;top:737px;width:33px;text-align:center;color:#000">215</div><div class="tri" style="left:34px;top:736px"></div><div class="dg" style="left:37px;top:737px">000002</div><div class="tri" style="left:120px;top:736px"></div><div class="dg" style="left:123px;top:737px">2006</div><div class="cj" style="left:209px;top:736px">郁亮</div><div class="tri" style="left:598px;top:736px"></div><div class="dg" style="left:601px;top:737px">0</div><div class="tri" style="left:723px;top:736px"></div><div class="dg" style="left:726px;top:737px">10</div><div class="tri" style="left:828px;top:736px"></div><div class="dg" style="left:831px;top:737px">0.09272</div><div class="tri" style="left:933px;top:736px"></div><div class="dg" style="left:936px;top:737px">0</div><div class="tri" style="left:1038px;top:736px"></div><div class="dg" style="left:1041px;top:737px">0.657387</div><div class="dg" style="left:0;top:761px;width:33px;text-align:center;color:#000">216</div><div class="tri" style="left:34px;top:760px"></div><div class="dg" style="left:37px;top:761px">000002</div><div class="tri" style="left:120px;top:760px"></div><div class="dg" style="left:123px;top:761px">2006</div><div class="cj" style="left:209px;top:760px">王石</div><div class="tri" style="left:598px;top:760px"></div><div class="dg" style="left:601px;top:761px">0</div><div class="tri" style="left:723px;top:760px"></div><div class="dg" style="left:726px;top:761px">10</div><div class="tri" style="left:828px;top:760px"></div><div class="dg" style="left:831px;top:761px">0.09272</div><div class="tri" style="left:933px;top:760px"></div><div class="dg" style="left:936px;top:761px">0</div><div class="tri" style="left:1038px;top:760px"></div><div class="dg" style="left:1041px;top:761px">0.657387</div><div class="dg" style="left:0;top:785px;width:33px;text-align:center;color:#000">217</div><div class="tri" style="left:34px;top:784px"></div><div class="dg" style="left:37px;top:785px">000002</div><div class="tri" style="left:120px;top:784px"></div><div class="dg" style="left:123px;top:785px">2006</div><div class="cj" style="left:209px;top:784px">陈志裕</div><div class="tri" style="left:598px;top:784px"></div><div class="dg" style="left:601px;top:785px">0</div><div class="tri" style="left:723px;top:784px"></div><div class="dg" style="left:726px;top:785px">10</div><div class="tri" style="left:828px;top:784px"></div><div class="dg" style="left:831px;top:785px">0.09272</div><div class="tri" style="left:933px;top:784px"></div><div class="dg" style="left:936px;top:785px">0</div><div class="tri" style="left:1038px;top:784px"></div><div class="dg" style="left:1041px;top:785px">0.657387</div><div class="dg" style="left:0;top:809px;width:33px;text-align:center;color:#000">218</div><div class="tri" style="left:34px;top:808px"></div><div class="dg" style="left:37px;top:809px">000002</div><div class="tri" style="left:120px;top:808px"></div><div class="dg" style="left:123px;top:809px">2006</div><div class="cj" style="left:209px;top:808px">肖莉</div><div class="tri" style="left:598px;top:808px"></div><div class="dg" style="left:601px;top:809px">0</div><div class="tri" style="left:723px;top:808px"></div><div class="dg" style="left:726px;top:809px">10</div><div class="tri" style="left:828px;top:808px"></div><div class="dg" style="left:831px;top:809px">0.09272</div><div class="tri" style="left:933px;top:808px"></div><div class="dg" style="left:936px;top:809px">0</div><div class="tri" style="left:1038px;top:808px"></div><div class="dg" style="left:1041px;top:809px">0.657387</div><div class="dg" style="left:0;top:833px;width:33px;text-align:center;color:#000">219</div><div class="tri" style="left:34px;top:832px"></div><div class="dg" style="left:37px;top:833px">000002</div><div class="tri" style="left:120px;top:832px"></div><div class="dg" style="left:123px;top:833px">2006</div><div class="cj" style="left:209px;top:832px">宋林</div><div class="tri" style="left:598px;top:832px"></div><div class="dg" style="left:601px;top:833px">0</div><div class="tri" style="left:723px;top:832px"></div><div class="dg" style="left:726px;top:833px">10</div><div class="tri" style="left:828px;top:832px"></div><div class="dg" style="left:831px;top:833px">0.09272</div><div class="tri" style="left:933px;top:832px"></div><div class="dg" style="left:936px;top:833px">0</div><div class="tri" style="left:1038px;top:832px"></div><div class="dg" style="left:1041px;top:833px">0.657387</div><div class="dg" style="left:0;top:857px;width:33px;text-align:center;color:#000">220</div><div class="tri" style="left:34px;top:856px"></div><div class="dg" style="left:37px;top:857px">000002</div><div class="tri" style="left:120px;top:856px"></div><div class="dg" style="left:123px;top:857px">2006</div><div class="cj" style="left:209px;top:856px">蒋伟</div><div class="tri" style="left:598px;top:856px"></div><div class="dg" style="left:601px;top:857px">0</div><div class="tri" style="left:723px;top:856px"></div><div class="dg" style="left:726px;top:857px">22</div><div class="tri" style="left:828px;top:856px"></div><div class="dg" style="left:831px;top:857px">0.107304</div><div class="tri" style="left:933px;top:856px"></div><div class="dg" style="left:936px;top:857px">0.001118</div><div class="tri" style="left:1038px;top:856px"></div><div class="dg" style="left:1041px;top:857px">0.853759</div><div class="dg" style="left:0;top:881px;width:33px;text-align:center;color:#000">221</div><div class="tri" style="left:34px;top:880px"></div><div class="dg" style="left:37px;top:881px">000002</div><div class="tri" style="left:120px;top:880px"></div><div class="dg" style="left:123px;top:881px">2006</div><div class="cj" style="left:209px;top:880px">李志荣</div><div class="tri" style="left:598px;top:880px"></div><div class="dg" style="left:601px;top:881px">1</div><div class="tri" style="left:723px;top:880px"></div><div class="dg" style="left:726px;top:881px">10</div><div class="tri" style="left:828px;top:880px"></div><div class="dg" style="left:831px;top:881px">0.09272</div><div class="tri" style="left:933px;top:880px"></div><div class="dg" style="left:936px;top:881px">0</div><div class="tri" style="left:1038px;top:880px"></div><div class="dg" style="left:1041px;top:881px">0.657387</div><div class="dg" style="left:0;top:905px;width:33px;text-align:center;color:#000">222</div><div class="tri" style="left:34px;top:904px"></div><div class="dg" style="left:37px;top:905px">000002</div><div class="tri" style="left:120px;top:904px"></div><div class="dg" style="left:123px;top:905px">2006</div><div class="cj" style="left:209px;top:904px">王印</div><div class="tri" style="left:598px;top:904px"></div><div class="dg" style="left:601px;top:905px">0</div><div class="tri" style="left:723px;top:904px"></div><div class="dg" style="left:726px;top:905px">10</div><div class="tri" style="left:828px;top:904px"></div><div class="dg" style="left:831px;top:905px">0.09272</div><div class="tri" style="left:933px;top:904px"></div><div class="dg" style="left:936px;top:905px">0</div><div class="tri" style="left:1038px;top:904px"></div><div class="dg" style="left:1041px;top:905px">0.657387</div><div class="dg" style="left:0;top:929px;width:33px;text-align:center;color:#000">223</div><div class="tri" style="left:34px;top:928px"></div><div class="dg" style="left:37px;top:929px">000002</div><div class="tri" style="left:120px;top:928px"></div><div class="dg" style="left:123px;top:929px">2006</div><div class="cj" style="left:209px;top:928px">李家晖</div><div class="tri" style="left:598px;top:928px"></div><div class="dg" style="left:601px;top:929px">1</div><div class="tri" style="left:723px;top:928px"></div><div class="dg" style="left:726px;top:929px">10</div><div class="tri" style="left:828px;top:928px"></div><div class="dg" style="left:831px;top:929px">0.09272</div><div class="tri" style="left:933px;top:928px"></div><div class="dg" style="left:936px;top:929px">0</div><div class="tri" style="left:1038px;top:928px"></div><div class="dg" style="left:1041px;top:929px">0.657387</div><div class="dg" style="left:0;top:953px;width:33px;text-align:center;color:#000">224</div><div class="tri" style="left:34px;top:952px"></div><div class="dg" style="left:37px;top:953px">000002</div><div class="tri" style="left:120px;top:952px"></div><div class="dg" style="left:123px;top:953px">2006</div><div class="cj" style="left:209px;top:952px">徐林倩丽</div><div class="tri" style="left:598px;top:952px"></div><div class="dg" style="left:601px;top:953px">1</div><div class="tri" style="left:723px;top:952px"></div><div class="dg" style="left:726px;top:953px">10</div><div class="tri" style="left:828px;top:952px"></div><div class="dg" style="left:831px;top:953px">0.09272</div><div class="tri" style="left:933px;top:952px"></div><div class="dg" style="left:936px;top:953px">0</div><div class="tri" style="left:1038px;top:952px"></div><div class="dg" style="left:1041px;top:953px">0.657387</div></div><div class="a" style="left:1519px;top:495px;width:81px;height:26px;border:2px solid #217346;border-right:none"></div><div class="a" style="left:1595px;top:515px;width:5px;height:8px;background:#fff"></div><div class="a" style="left:1597px;top:517px;width:3px;height:5px;background:#217346"></div><div class="a" style="left:0px;top:973px;width:1600px;height:29px;background:#e6e6e6"></div><div class="a" style="left:0px;top:973px;width:1600px;height:1px;background:#c6c6c6"></div><div class="a" style="left:103px;top:973px;width:82px;height:26px;background:#fff;border-left:1px solid #c6c6c6;border-right:1px solid #c6c6c6"></div><div class="a" style="left:103px;top:997px;width:82px;height:2px;background:#217346"></div><div class="a" style="left:116px;top:973px;font-size:17px;line-height:20px;color:#217346">Sheet1</div><svg style="left:0;top:970" width="260" height="32"><path d="M33 13 L29 17 L33 21 Z" fill="#c0c0c0"/><path d="M58 13 L62 17 L58 21 Z" fill="#a8a8a8"/><circle cx="228" cy="18" r="9.5" fill="none" stroke="#777" stroke-width="1.2"/><path d="M222.5 18 h11 M228 12.5 v11" stroke="#777" stroke-width="1.7"/></svg><svg style="left:1140px;top:970px" width="460" height="32"><rect x="10" y="9" width="2.5" height="2.5" fill="#aaa"/><rect x="10" y="15" width="2.5" height="2.5" fill="#aaa"/><rect x="10" y="21" width="2.5" height="2.5" fill="#aaa"/></svg><div class="a" style="left:1167px;top:978px;width:433px;height:19px;background:#fff;border:1px solid #c6c6c6;border-right:none"></div><div class="a" style="left:1186px;top:978px;width:1px;height:19px;background:#c6c6c6"></div><svg style="left:1167px;top:978px" width="20" height="19"><path d="M12 5 L7 9.5 L12 14 Z" fill="#666"/></svg></body></html>
